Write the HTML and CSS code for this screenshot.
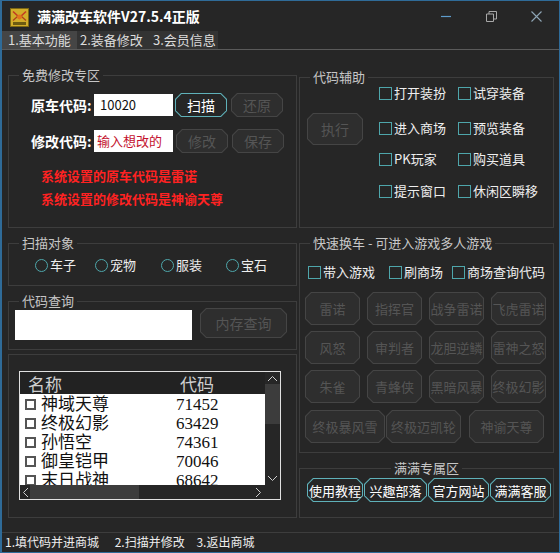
FILE: index.html
```html
<!DOCTYPE html>
<html lang="zh-CN">
<head>
    <meta charset="UTF-8">
    <title>满满改车软件</title>
    <link rel="stylesheet" href="styles.css">
</head>
<body>
    <div class="window">
        <div class="titlebar">
            <svg class="app-icon" viewBox="0 0 19 19">
                <rect x="0.5" y="0.5" width="18" height="18" fill="#d2ad2a" stroke="#7d6814"/>
                <path d="M3 3.5 L9.5 9.5 L16 3.5" fill="none" stroke="#c23a22" stroke-width="1.6"/>
                <path d="M3 12.5 L7.5 8.5 M16 12.5 L11.5 8.5" fill="none" stroke="#b0401c" stroke-width="1.3"/>
                <circle cx="9.5" cy="9" r="2.4" fill="#e2741c"/>
                <rect x="3" y="14" width="13" height="3" fill="#6d5b12"/>
            </svg>
            <span class="title">满满改车软件V27.5.4正版</span>
            <div class="controls">
                <span class="ctl">
                    <svg width="11" height="3" viewBox="0 0 11 3"><path d="M0 1.5 H10" stroke="#5e9ccb" stroke-width="1.2"/></svg>
                </span>
                <span class="ctl">
                    <svg width="11" height="11" viewBox="0 0 11 11"><path d="M0.5 3 H7.5 V10.5 H0.5 Z M3 3 V0.5 H10.5 V8 H7.5" fill="none" stroke="#a8a8a8"/></svg>
                </span>
                <span class="ctl">
                    <svg width="11" height="11" viewBox="0 0 11 11"><path d="M0.5 0.5 L10.5 10.5 M10.5 0.5 L0.5 10.5" stroke="#8fa6b6" stroke-width="1.1"/></svg>
                </span>
            </div>
        </div>

        <div class="tabs">
            <div class="tab active tab-1">1.基本功能</div>
            <div class="tab tab-2">2.装备修改</div>
            <div class="tab tab-3">3.会员信息</div>
        </div>

        <div class="main">
            <!-- left column -->
            <div class="col col-left">
                <div class="group g-free">
                    <span class="legend">免费修改专区</span>
                    <div class="form-row">
                        <span class="field-label">原车代码:</span>
                        <div class="text-input">10020</div>
                        <div class="oct btn-on btn-sm"><span>扫描</span></div>
                        <div class="oct btn-off btn-sm"><span>还原</span></div>
                    </div>
                    <div class="form-row">
                        <span class="field-label">修改代码:</span>
                        <div class="text-input hint">输入想改的</div>
                        <div class="oct btn-off btn-sm"><span>修改</span></div>
                        <div class="oct btn-off btn-sm"><span>保存</span></div>
                    </div>
                    <div class="notes">
                        <p class="note">系统设置的原车代码是雷诺</p>
                        <p class="note">系统设置的修改代码是神谕天尊</p>
                    </div>
                </div>

                <div class="group g-scan">
                    <span class="legend">扫描对象</span>
                    <div class="radios">
                        <label class="radio r-1"><i></i>车子</label>
                        <label class="radio r-2"><i></i>宠物</label>
                        <label class="radio r-3"><i></i>服装</label>
                        <label class="radio"><i></i>宝石</label>
                    </div>
                </div>

                <div class="group g-query">
                    <span class="legend">代码查询</span>
                    <div class="query-row">
                        <div class="query-input"></div>
                        <div class="oct btn-off btn-query"><span>内存查询</span></div>
                    </div>
                </div>

                <div class="group g-list">
                    <div class="listbox">
                        <div class="lb-main">
                            <div class="lb-content">
                                <div class="lb-head">
                                    <span class="col-name">名称</span>
                                    <span>代码</span>
                                </div>
                                <div class="lb-rows">
                                    <div class="lb-row"><span class="col-name"><i></i>神域天尊</span><span>71452</span></div>
                                    <div class="lb-row"><span class="col-name"><i></i>终极幻影</span><span>63429</span></div>
                                    <div class="lb-row"><span class="col-name"><i></i>孙悟空</span><span>74361</span></div>
                                    <div class="lb-row"><span class="col-name"><i></i>御皇铠甲</span><span>70046</span></div>
                                    <div class="lb-row"><span class="col-name"><i></i>末日战神</span><span>68642</span></div>
                                </div>
                            </div>
                            <div class="vscroll">
                                <svg width="11" height="7" viewBox="0 0 11 7"><path d="M1 6 L5.5 1.5 L10 6" fill="none" stroke="#cfcfcf"/></svg>
                                <div class="vthumb"></div>
                                <svg class="down" width="11" height="7" viewBox="0 0 11 7"><path d="M1 1 L5.5 5.5 L10 1" fill="none" stroke="#cfcfcf"/></svg>
                            </div>
                        </div>
                        <div class="hscroll">
                            <svg width="7" height="11" viewBox="0 0 7 11"><path d="M6 1 L1.5 5.5 L6 10" fill="none" stroke="#cfcfcf"/></svg>
                            <div class="hthumb"></div>
                            <svg class="right" width="7" height="11" viewBox="0 0 7 11"><path d="M1 1 L5.5 5.5 L1 10" fill="none" stroke="#cfcfcf"/></svg>
                        </div>
                    </div>
                </div>
            </div>

            <!-- right column -->
            <div class="col col-right">
                <div class="group g-assist">
                    <span class="legend">代码辅助</span>
                    <div class="assist-body">
                        <div class="oct btn-off btn-exec"><span>执行</span></div>
                        <div class="cb-grid">
                            <label class="cb"><i></i>打开装扮</label>
                            <label class="cb"><i></i>试穿装备</label>
                            <label class="cb"><i></i>进入商场</label>
                            <label class="cb"><i></i>预览装备</label>
                            <label class="cb"><i></i>PK玩家</label>
                            <label class="cb"><i></i>购买道具</label>
                            <label class="cb"><i></i>提示窗口</label>
                            <label class="cb"><i></i>休闲区瞬移</label>
                        </div>
                    </div>
                </div>

                <div class="group g-swap">
                    <span class="legend">快速换车 - 可进入游戏多人游戏</span>
                    <div class="swap-opts">
                        <label class="cb opt-1"><i></i>带入游戏</label>
                        <label class="cb opt-2"><i></i>刷商场</label>
                        <label class="cb"><i></i>商场查询代码</label>
                    </div>
                    <div class="car-grid">
                        <div class="car-row">
                            <div class="oct btn-off car"><span>雷诺</span></div>
                            <div class="oct btn-off car"><span>指挥官</span></div>
                            <div class="oct btn-off car"><span>战争雷诺</span></div>
                            <div class="oct btn-off car"><span>飞虎雷诺</span></div>
                        </div>
                        <div class="car-row">
                            <div class="oct btn-off car"><span>风怒</span></div>
                            <div class="oct btn-off car"><span>审判者</span></div>
                            <div class="oct btn-off car"><span>龙胆逆鳞</span></div>
                            <div class="oct btn-off car"><span>雷神之怒</span></div>
                        </div>
                        <div class="car-row">
                            <div class="oct btn-off car"><span>朱雀</span></div>
                            <div class="oct btn-off car"><span>青蜂侠</span></div>
                            <div class="oct btn-off car"><span>黑暗风暴</span></div>
                            <div class="oct btn-off car"><span>终极幻影</span></div>
                        </div>
                        <div class="car-row last">
                            <div class="oct btn-off car wide"><span>终极暴风雪</span></div>
                            <div class="oct btn-off car mid"><span>终极迈凯轮</span></div>
                            <div class="oct btn-off car mid"><span>神谕天尊</span></div>
                        </div>
                    </div>
                </div>

                <div class="group g-vip">
                    <span class="legend">满满专属区</span>
                    <div class="vip-row">
                        <div class="oct btn-on vip v-1"><span>使用教程</span></div>
                        <div class="oct btn-on vip v-2"><span>兴趣部落</span></div>
                        <div class="oct btn-on vip v-3"><span>官方网站</span></div>
                        <div class="oct btn-on vip v-3"><span>满满客服</span></div>
                    </div>
                </div>
            </div>
        </div>

        <div class="statusbar">
            <span>1.填代码并进商城</span>
            <span class="gap-l">2.扫描并修改</span>
            <span class="gap-s">3.返出商城</span>
        </div>
    </div>
</body>
</html>
```

FILE: styles.css
```css
* {
    box-sizing: border-box;
}

body {
    margin: 0;
    background-color: #262626;
    font-family: "Noto Sans CJK SC", "Microsoft YaHei", sans-serif;
    font-size: 13px;
    color: #e6e6e6;
}

.window {
    width: 560px;
    height: 553px;
    background: #262626;
    border: 1px solid #2f6b98;
    border-left-width: 2px;
    display: flex;
    flex-direction: column;
}

/* title bar */
.titlebar {
    height: 30px;
    flex-shrink: 0;
    display: flex;
    align-items: center;
}

.app-icon {
    width: 19px;
    height: 19px;
    margin-left: 8px;
    margin-top: 2px;
}

.title {
    margin-left: 8px;
    font-size: 14px;
    font-weight: bold;
    color: #fff;
}

.controls {
    margin-left: auto;
    display: flex;
    height: 100%;
}

.ctl {
    width: 45px;
    display: flex;
    align-items: center;
    justify-content: center;
}

/* tabs */
.tabs {
    height: 19px;
    flex-shrink: 0;
    display: flex;
    border-bottom: 1px solid #5a5a5a;
}

.tab {
    height: 18px;
    line-height: 18px;
    padding-left: 6px;
    background: #333;
    color: #dcdcdc;
}

.tab.active {
    background: #454545;
}

.tab-1 { width: 75px; }
.tab-2 { width: 70px; padding-left: 3px; }
.tab-3 { width: 71px; }

/* main area */
.main {
    flex: 1;
    display: flex;
    padding-left: 6px;
    gap: 2px;
}

.col {
    display: flex;
    flex-direction: column;
}

.col-left { width: 289px; }
.col-right { width: 255px; }

.group {
    position: relative;
    border: 1px solid #3d3d3d;
}

.legend {
    position: absolute;
    top: -10px;
    left: 10px;
    padding: 0 3px;
    line-height: 18px;
    background: #262626;
    color: #c6c6c6;
    white-space: nowrap;
}

/* octagon buttons */
.oct {
    position: relative;
    display: flex;
    align-items: center;
    justify-content: center;
    white-space: nowrap;
    clip-path: polygon(6px 0, calc(100% - 6px) 0, 100% 6px, 100% calc(100% - 6px), calc(100% - 6px) 100%, 6px 100%, 0 calc(100% - 6px), 0 6px);
}

.oct::before {
    content: "";
    position: absolute;
    inset: 1px;
    clip-path: polygon(5.5px 0, calc(100% - 5.5px) 0, 100% 5.5px, 100% calc(100% - 5.5px), calc(100% - 5.5px) 100%, 5.5px 100%, 0 calc(100% - 5.5px), 0 5.5px);
}

.oct span {
    position: relative;
}

.btn-on {
    background: #5fb1b9;
    color: #fff;
}

.btn-on::before {
    background: #262626;
}

.btn-off {
    background: #454545;
    color: #555;
}

.btn-off::before {
    background: #2e2e2e;
}

.btn-sm {
    width: 52px;
    height: 24px;
    font-size: 14px;
}

/* free modify */
.g-free {
    margin-top: 25px;
    height: 153px;
    padding: 17px 0 0 22px;
}

.form-row {
    display: flex;
    align-items: center;
    height: 24px;
}

.form-row + .form-row {
    margin-top: 12px;
}

.field-label {
    width: 63px;
    font-size: 14px;
    font-weight: bold;
    color: #fff;
}

.text-input {
    width: 79px;
    height: 22px;
    line-height: 22px;
    background: #fff;
    color: #111;
    padding-left: 6px;
    margin-right: 2px;
}

.text-input.hint {
    color: #c4122e;
    padding-left: 3px;
    margin-right: 3px;
}

.form-row .oct + .oct {
    margin-left: 4px;
}

.notes {
    margin: 11px 0 0 10px;
}

.note {
    margin: 0;
    line-height: 23px;
    font-weight: bold;
    color: #ff2222;
}

/* scan target */
.g-scan {
    margin-top: 15px;
    height: 43px;
    padding: 12px 0 0 26px;
}

.radios {
    display: flex;
}

.radio {
    display: flex;
    align-items: center;
    color: #eee;
    line-height: 18px;
}

.radio i {
    width: 13px;
    height: 13px;
    border: 1.5px solid #4ea6ab;
    border-radius: 50%;
    margin-right: 2px;
}

.r-1 { width: 60px; }
.r-2 { width: 66px; }
.r-3 { width: 65px; }

/* code query */
.g-query {
    margin-top: 15px;
    height: 49px;
    padding: 6px 0 0 6px;
}

.query-row {
    display: flex;
}

.query-input {
    width: 177px;
    height: 30px;
    margin-top: 2px;
    background: #fff;
}

.btn-query {
    width: 87px;
    height: 30px;
    margin-left: 8px;
    font-size: 14px;
}

/* list */
.g-list {
    margin-top: 4px;
    height: 164px;
    padding: 16px 0 0 10px;
}

.listbox {
    width: 262px;
    height: 129px;
    border: 1px solid #e0e0e0;
    display: flex;
    flex-direction: column;
}

.lb-main {
    flex: 1;
    display: flex;
    min-height: 0;
}

.lb-content {
    flex: 1;
    display: flex;
    flex-direction: column;
    background: #fff;
}

.lb-head {
    height: 22px;
    flex-shrink: 0;
    display: flex;
    align-items: center;
    background: #222;
    color: #cfcfcf;
    font-size: 17px;
    padding-left: 8px;
}

.lb-head .col-name {
    width: 152px;
}

.lb-rows {
    flex: 1;
    overflow: hidden;
    padding-top: 1px;
}

.lb-row {
    display: flex;
    height: 19px;
    line-height: 19px;
    font-family: "Liberation Serif", "Noto Sans CJK SC", serif;
    font-size: 17px;
    color: #111;
    padding-left: 5px;
}

.lb-row .col-name {
    width: 151px;
    display: flex;
    align-items: center;
}

.lb-row i {
    width: 11px;
    height: 11px;
    border: 2px solid #555;
    margin-right: 5px;
}

.vscroll {
    width: 15px;
    background: #262626;
    display: flex;
    flex-direction: column;
    align-items: center;
    padding-top: 3px;
}

.vthumb {
    width: 15px;
    height: 40px;
    margin-top: 2px;
    background: #3c3c3c;
}

.vscroll .down {
    margin-top: auto;
    margin-bottom: 3px;
}

.hscroll {
    height: 14px;
    flex-shrink: 0;
    background: #262626;
    display: flex;
    align-items: center;
    padding-left: 2px;
}

.hthumb {
    width: 109px;
    height: 14px;
    margin-left: 1px;
    background: #3c3c3c;
}

.hscroll .right {
    margin-left: 116px;
}

/* code assist */
.g-assist {
    margin-top: 27px;
    height: 151px;
}

.assist-body {
    display: flex;
    padding: 6px 0 0 7px;
}

.btn-exec {
    width: 56px;
    height: 32px;
    margin-top: 29px;
    font-size: 14px;
}

.cb-grid {
    margin-left: 16px;
    display: grid;
    grid-template-columns: 79px auto;
    grid-template-rows: 35px 31px 32px 20px;
    align-items: start;
}

.cb {
    display: flex;
    align-items: center;
    line-height: 18px;
    color: #eee;
    white-space: nowrap;
}

.cb i {
    width: 13px;
    height: 13px;
    border: 1px solid #4ea6ab;
    margin-right: 2px;
}

/* quick swap */
.g-swap {
    margin-top: 15px;
    height: 210px;
    padding: 19px 0 0 8px;
}

.swap-opts {
    display: flex;
}

.opt-1 { width: 81px; }
.opt-2 { width: 63px; }

.car-grid {
    margin: 11px 0 0 -3px;
    display: flex;
    flex-direction: column;
    gap: 6px;
}

.car-row {
    display: flex;
    gap: 7px;
}

.car-row.last {
    margin-top: 1px;
    gap: 1px;
}

.car {
    width: 55px;
    height: 33px;
}

.car.wide { width: 80px; }
.car.mid { width: 75px; }
.car-row.last .car.mid + .car.mid { margin-left: 7px; }

/* vip area */
.g-vip {
    margin-top: 15px;
    height: 50px;
    padding: 9px 0 0 7px;
}

.g-vip .legend {
    left: 91px;
}

.vip-row {
    display: flex;
    gap: 1px;
}

.vip {
    height: 24px;
    font-size: 13px;
}

.v-1 { width: 56px; }
.v-2 { width: 63px; }
.v-3 { width: 61px; }

/* status bar */
.statusbar {
    height: 20px;
    flex-shrink: 0;
    border-top: 1px solid #3d3d3d;
    padding-left: 3px;
    line-height: 18px;
    font-size: 12px;
    color: #eee;
    white-space: nowrap;
}

.gap-l { margin-left: 13px; }
.gap-s { margin-left: 9px; }
```
